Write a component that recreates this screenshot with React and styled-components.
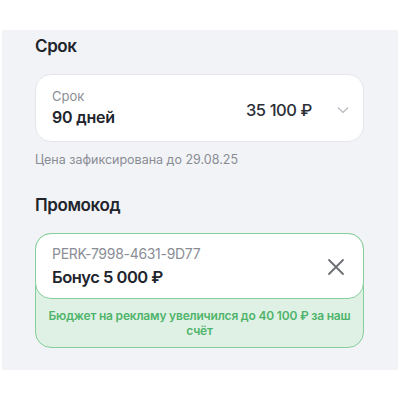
import React from "react";
import styled, { createGlobalStyle } from "styled-components";

const Global = createGlobalStyle`
  html, body { margin: 0; padding: 0; background: #ffffff; }
  body { font-family: Inter, "Noto Sans", sans-serif; color: #21242c; -webkit-font-smoothing: antialiased; }
`;

const Panel = styled.div`
  margin: 30px 2px 0 2px;
  height: 340px;
  box-sizing: border-box;
  background: #f2f3f6;
  padding: 4px 34px 0 33px;
  display: flex;
  flex-direction: column;
`;

const Heading = styled.div`
  font-size: 17px;
  line-height: 24px;
  font-weight: 600;
  letter-spacing: -0.4px;
  color: #21242c;
  margin-top: ${(p) => p.$mt || 0}px;
`;

const SelectCard = styled.div`
  margin-top: 16px;
  height: 68px;
  box-sizing: border-box;
  background: #ffffff;
  border: 1px solid #e4e6eb;
  border-radius: 16px;
  display: flex;
  align-items: center;
  padding: 0 14px 0 16px;
`;

const Stack = styled.div`
  display: flex;
  flex-direction: column;
  flex: 1;
`;

const SmallLabel = styled.div`
  font-size: 13px;
  line-height: 17px;
  color: #8b8e96;
`;

const Value = styled.div`
  font-size: ${(p) => p.$size || 16}px;
  line-height: 21px;
  font-weight: 600;
  letter-spacing: ${(p) => p.$ls || 0}px;
  color: #21242c;
  margin-top: ${(p) => p.$mt || 0}px;
`;

const Price = styled.div`
  font-size: 16.5px;
  font-weight: 450;
  letter-spacing: -0.4px;
  color: #2b2e36;
  margin-top: 3px;
  margin-right: 25px;
`;

const Caption = styled.div`
  margin-top: 10px;
  font-size: 12.5px;
  line-height: 16px;
  color: #898c95;
`;

const PromoBox = styled.div`
  margin-top: 16px;
  border: 1px solid #86cf9a;
  border-radius: 16px;
  background: #dff1e4;
  display: flex;
  flex-direction: column;
`;

const PromoTop = styled.div`
  margin: -1px -1px 0 -1px;
  height: 66px;
  box-sizing: border-box;
  background: #ffffff;
  border: 1px solid #86cf9a;
  border-radius: 16px;
  display: flex;
  align-items: center;
  padding: 0 18px 0 16px;
`;

const Code = styled.div`
  font-size: 14px;
  line-height: 19px;
  letter-spacing: -0.3px;
  color: #8b8e96;
`;

const CloseBtn = styled.button`
  border: 0;
  background: transparent;
  padding: 0;
  display: flex;
  margin-top: 2px;
`;

const Note = styled.div`
  padding: 9px 8px 9px;
  text-align: center;
  font-size: 12px;
  line-height: 15px;
  font-weight: 600;
  letter-spacing: -0.2px;
  color: #4fb46b;
`;

export default function App() {
  return (
    <>
      <Global />
      <Panel>
        <Heading>Срок</Heading>
        <SelectCard>
          <Stack>
            <SmallLabel>Срок</SmallLabel>
            <Value $mt={2} $ls={-0.2}>90 дней</Value>
          </Stack>
          <Price>35 100 ₽</Price>
          <svg width="12" height="8" viewBox="0 0 12 8" style={{ marginTop: 3 }}>
            <polyline points="1,1.5 6,6.5 11,1.5" fill="none" stroke="#b4b7be" strokeWidth="1.2" />
          </svg>
        </SelectCard>
        <Caption>Цена зафиксирована до 29.08.25</Caption>
        <Heading $mt={25}>Промокод</Heading>
        <PromoBox>
          <PromoTop>
            <Stack>
              <Code>PERK-7998-4631-9D77</Code>
              <Value $size={16.5} $ls={-0.5} $mt={4}>Бонус 5 000 ₽</Value>
            </Stack>
            <CloseBtn aria-label="Удалить">
              <svg width="18" height="18" viewBox="0 0 18 18">
                <path d="M2 2 L16 16 M16 2 L2 16" stroke="#6b6e75" strokeWidth="1.8" strokeLinecap="round" />
              </svg>
            </CloseBtn>
          </PromoTop>
          <Note>Бюджет на рекламу увеличился до 40 100 ₽ за наш счёт</Note>
        </PromoBox>
      </Panel>
    </>
  );
}
